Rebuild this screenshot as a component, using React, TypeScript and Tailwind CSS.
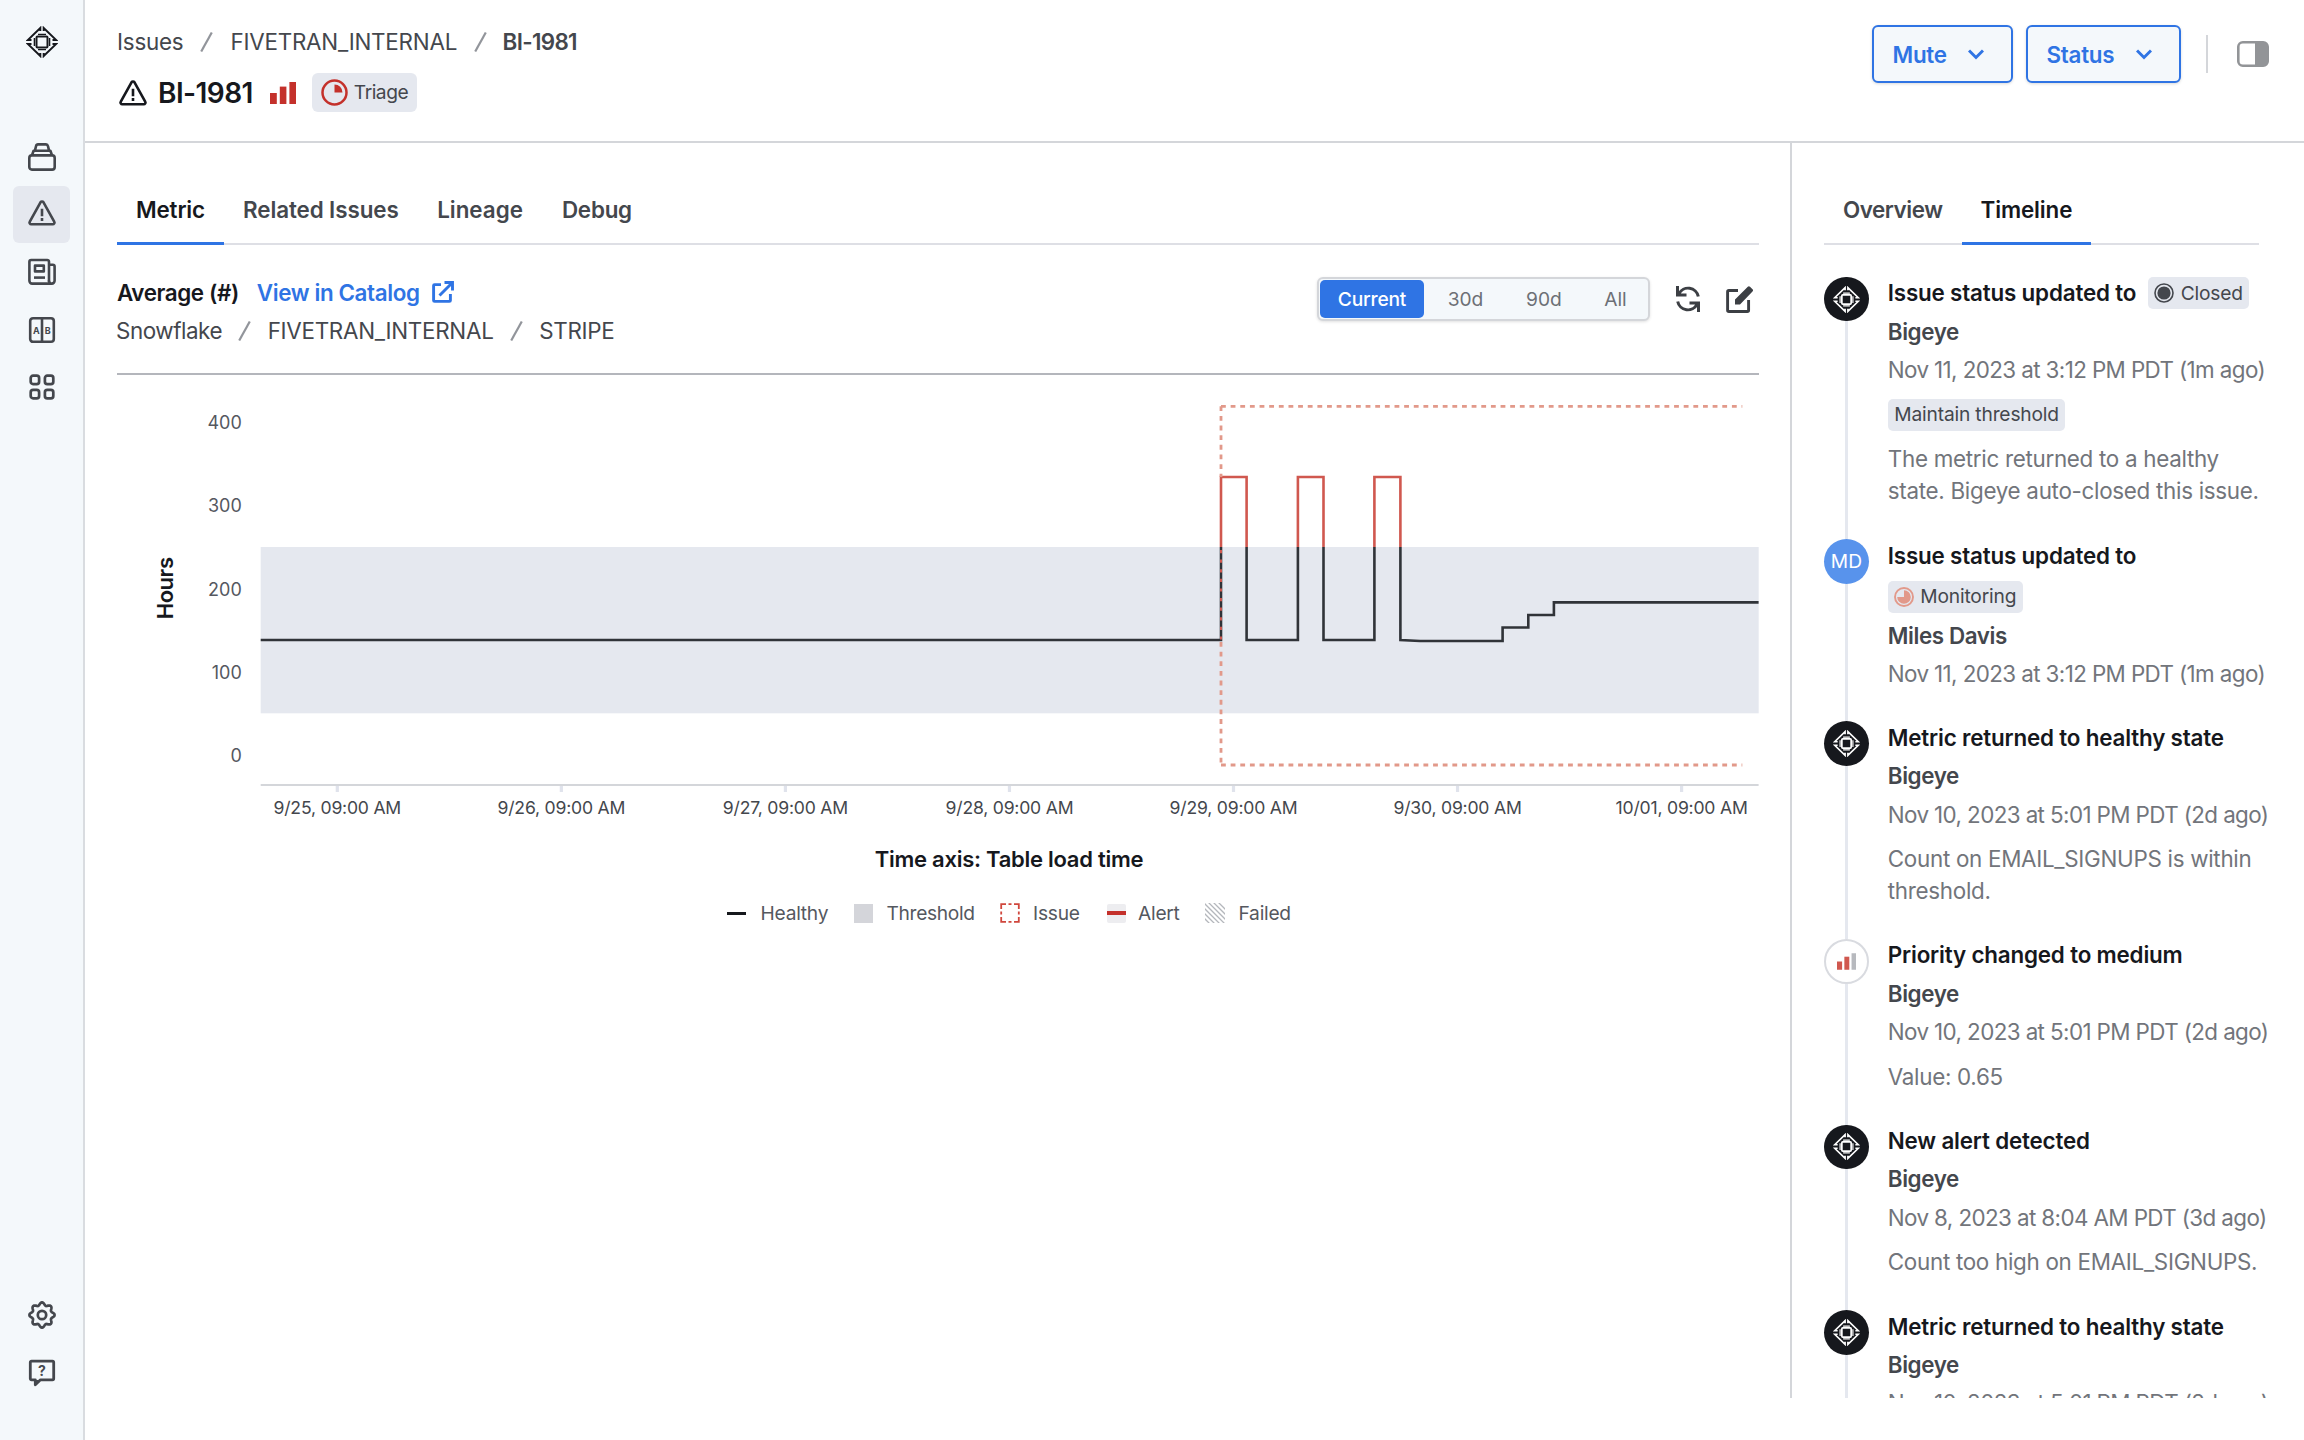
import type { ReactNode } from 'react'
import clsx from 'clsx'

function BigeyeMark({ className }: { className?: string }) {
  return (
    <svg viewBox="0 0 32 32" fill="none" stroke="currentColor" strokeWidth="2" className={className}>
      <path d="M14.3 5V2L2 13.900h3.500M17.700 5V2L30 13.900h-3.500M14.300 27v3L2 18.100h3.500M17.700 27v3L30 18.100h-3.500" />
      <rect x="10.5" y="10.5" width="11" height="11" rx="1" />
      <path d="M12 8.4h8M12 23.6h8M8.4 12v8M23.6 12v8" strokeWidth="1.4" />
    </svg>
  )
}

function WarningIcon({ className }: { className?: string }) {
  return (
    <svg viewBox="0 0 28 26" fill="none" stroke="currentColor" strokeWidth="2.6" strokeLinejoin="round" className={className}>
      <path d="M12.5 2.3a1.8 1.8 0 0 1 3 0l10.7 19.3a1.7 1.7 0 0 1-1.5 2.6H3.3a1.7 1.7 0 0 1-1.5-2.6z" />
      <path d="M14 8.8v7.4M14 18v3" />
    </svg>
  )
}

function CollectionsIcon() {
  return (
    <svg viewBox="0 0 28 28" fill="none" stroke="currentColor" strokeWidth="2.6" strokeLinejoin="round" className="size-7">
      <rect x="1.3" y="12.4" width="25.4" height="14.2" rx="2.6" />
      <path d="M4 12.2l1.6-4.4h16.8l1.6 4.4M7 7.4l1-4.2c.3-1.2 1-1.8 2-1.8h8c1 0 1.7.6 2 1.8l1 4.2" />
    </svg>
  )
}

function NewsIcon() {
  return (
    <svg viewBox="0 0 28 28" fill="none" stroke="currentColor" strokeWidth="2.6" strokeLinejoin="round" className="size-7">
      <path d="M21 24V3.8A1.8 1.8 0 0 0 19.2 2H3.2a1.8 1.8 0 0 0-1.8 1.8v19a2.8 2.8 0 0 0 2.8 2.8h19.6a2.8 2.8 0 0 0 2.8-2.8V8.6a1.8 1.8 0 0 0-1.8-1.8H21" />
      <path d="M21 22.5a3 3 0 0 0 1.5 3" />
      <rect x="7" y="7.6" width="8.8" height="5.8" />
      <path d="M6 19.6h11" />
    </svg>
  )
}

function CompareIcon() {
  return (
    <svg viewBox="0 0 28 28" fill="none" stroke="currentColor" strokeWidth="2.6" className="size-7">
      <rect x="2.2" y="2.2" width="23.6" height="23.6" rx="2.8" />
      <path d="M14 2v24" />
      <text x="8.4" y="17.5" textAnchor="middle" fill="currentColor" stroke="none" className="text-[9px] font-bold">A</text>
      <text x="19.8" y="17.5" textAnchor="middle" fill="currentColor" stroke="none" className="text-[9px] font-bold">B</text>
    </svg>
  )
}

function GridIcon() {
  return (
    <svg viewBox="0 0 28 28" fill="none" stroke="currentColor" strokeWidth="2.7" className="size-7">
      <rect x="2.7" y="2.7" width="8.4" height="8.4" rx="2.4" />
      <rect x="16.9" y="2.7" width="8.4" height="8.4" rx="2.4" />
      <rect x="2.7" y="16.9" width="8.4" height="8.4" rx="2.4" />
      <rect x="16.9" y="16.9" width="8.4" height="8.4" rx="2.4" />
    </svg>
  )
}

// eight rounded lobes around the hub
const gearPoints = Array.from({ length: 96 }, (_, i) => {
  const a = (i / 96) * Math.PI * 2
  const r = 11.2 + 1.4 * Math.cos(8 * a)
  return `${(14 + r * Math.cos(a)).toFixed(2)},${(14 + r * Math.sin(a)).toFixed(2)}`
}).join(' ')

function GearIcon() {
  return (
    <svg viewBox="0 0 28 28" fill="none" stroke="currentColor" strokeWidth="2.7" strokeLinejoin="round" className="size-7">
      <polygon points={gearPoints} />
      <circle cx="14" cy="14" r="4.2" />
    </svg>
  )
}

function HelpIcon() {
  return (
    <svg viewBox="0 0 28 28" fill="none" stroke="currentColor" strokeWidth="2.8" strokeLinejoin="round" className="size-7">
      <path d="M3.5 2.2h21a1.2 1.2 0 0 1 1.2 1.2v16.2a1.2 1.2 0 0 1-1.2 1.2H12.5L7.3 25.8v-5H3.5a1.2 1.2 0 0 1-1.2-1.2V3.4a1.2 1.2 0 0 1 1.2-1.2z" />
      <path d="M7 21h4.5l-4.2 4.5z" fill="currentColor" stroke="none" />
      <text x="14" y="16.5" textAnchor="middle" fill="currentColor" stroke="none" className="text-[14px] font-bold">?</text>
    </svg>
  )
}

function PriorityBars({ className, lastClass = 'fill-current' }: { className?: string; lastClass?: string }) {
  return (
    <svg viewBox="0 0 26 22" fill="currentColor" className={className}>
      <rect x="0" y="11" width="6.8" height="11" />
      <rect x="9.8" y="4.6" width="6.6" height="17.4" />
      <rect x="19.4" y="0" width="6.6" height="22" className={lastClass} />
    </svg>
  )
}

function Chevron() {
  return (
    <svg viewBox="0 0 16 11" fill="none" stroke="currentColor" strokeWidth="3" className="h-[11px] w-4">
      <path d="M1 1.5l7 7 7-7" />
    </svg>
  )
}

function Tag({ children, className }: { children: ReactNode; className?: string }) {
  return (
    <span className={clsx('inline-flex h-8 items-center rounded-[5px] bg-[#e5e8ef] px-[6.5px] text-[19.2px] tracking-[-0.009em] text-[#44474d]', className)}>
      {children}
    </span>
  )
}

function ClosedTag() {
  return (
    <Tag className="ml-[11.5px]">
      <svg viewBox="0 0 20 20" fill="none" stroke="currentColor" strokeWidth="1.6" className="mr-[6.5px] size-5">
        <circle cx="10" cy="10" r="9" />
        <circle cx="10" cy="10" r="6.6" fill="currentColor" stroke="none" />
      </svg>
      Closed
    </Tag>
  )
}

function MonitoringTag() {
  return (
    <Tag>
      <svg viewBox="0 0 20 20" fill="none" className="mr-[6px] size-5 text-[#e2998a]">
        <circle cx="10" cy="10" r="9" stroke="currentColor" strokeWidth="1.9" />
        <path d="M10 10V3.2A6.8 6.8 0 1 1 3.2 10z" fill="currentColor" />
      </svg>
      Monitoring
    </Tag>
  )
}

const navItems = [CollectionsIcon, null, NewsIcon, CompareIcon, GridIcon]

function Sidebar() {
  return (
    <aside className="flex w-[85px] shrink-0 flex-col items-center border-r-2 border-[#d9dce0] bg-[#f4f8fb] text-[#44474d]">
      <BigeyeMark className="mt-[26px] size-8 text-[#16181d]" />
      <nav className="mt-[70px] flex flex-col">
        {navItems.map((Icon, i) => (
          <a key={i} className={clsx('flex size-[57.6px] items-center justify-center rounded-[6px]', !Icon && 'bg-[#e5e8ef]')}>
            {Icon ? <Icon /> : <WarningIcon className="-mt-[3px] h-[26px] w-7" />}
          </a>
        ))}
      </nav>
      <div className="mt-auto mb-[38.5px] flex flex-col">
        <a className="flex h-[57.6px] items-center"><GearIcon /></a>
        <a className="flex h-[57.6px] items-center"><HelpIcon /></a>
      </div>
    </aside>
  )
}

function Slash() {
  return (
    <svg viewBox="0 0 13 20" stroke="#92959b" strokeWidth="2.2" className="h-5 w-[13px] shrink-0">
      <path d="M1.2 19.5 11.8.5" />
    </svg>
  )
}

function HeaderButton({ label, className }: { label: string; className: string }) {
  return (
    <button className={clsx('flex h-[58px] items-center justify-between rounded-[6px] border-2 border-[#2f74e4] bg-[#f4f8fb] pt-px pr-[27px] pl-[19px] text-[22.4px] font-semibold tracking-[-0.012em] text-[#2f74e4] shadow-[0_1px_3px_rgba(0,0,0,0.15)]', className)}>
      {label}
      <Chevron />
    </button>
  )
}

function Header() {
  return (
    <header className="flex h-[143px] shrink-0 justify-between border-b-2 border-[#d4d6da] pl-8">
      <div className="pt-[23px]">
        <div className="flex h-[38px] items-center gap-[17px] text-[22.4px] tracking-[-0.01em] text-[#44474d]">
          <span>Issues</span>
          <Slash />
          <span>FIVETRAN_INTERNAL</span>
          <Slash />
          <span className="-ml-[1.5px] font-semibold tracking-[-0.03em]">BI-1981</span>
        </div>
        <div className="mt-[12.5px] flex h-[38px] items-center">
          <WarningIcon className="ml-[2px] h-[26px] w-7 text-[#16181d]" />
          <h1 className="ml-[11px] text-[28px] font-semibold tracking-[-0.02em] text-[#16181d]">BI-1981</h1>
          <PriorityBars className="ml-[17px] h-[22px] w-[26px] text-[#c4312b]" />
          <span className="ml-4 flex h-[38.4px] items-center rounded-[6px] bg-[#e5e8ef] px-[9px] text-[19.2px] tracking-[-0.025em] text-[#44474d]">
            <svg viewBox="0 0 27 27" fill="none" className="mr-[6px] size-[27px] text-[#c4312b]">
              <circle cx="13.5" cy="13.5" r="12" stroke="currentColor" strokeWidth="2.5" />
              <path d="M13.5 5.5a8 8 0 0 1 8 8h-8z" fill="currentColor" />
            </svg>
            Triage
          </span>
        </div>
      </div>
      <div className="flex items-start pt-[25px]">
        <HeaderButton label="Mute" className="w-[141px]" />
        <HeaderButton label="Status" className="ml-[13px] w-[155.5px]" />
        <div className="mt-[10px] ml-[25px] h-[38px] w-[2px] bg-[#d4d6da]" />
        <svg viewBox="0 0 32 26" fill="none" className="mt-4 mr-[35px] ml-[29px] h-[26px] w-8 text-[#929497]">
          <rect x="1.3" y="1.3" width="29.4" height="23.4" rx="4.5" stroke="currentColor" strokeWidth="2.6" />
          <path d="M18 1h8.5A4.5 4.5 0 0 1 31 5.5v15a4.5 4.5 0 0 1-4.5 4.5H18z" fill="currentColor" />
        </svg>
      </div>
    </header>
  )
}

function Tab({ label, active, className }: { label: string; active?: boolean; className?: string }) {
  return (
    <button
      className={clsx(
        '-mb-[2px] h-[70px] border-b-[3.5px] pt-[3.5px] text-[22.4px] font-semibold',
        active ? 'border-[#2f74e4] text-[#16181d]' : 'border-transparent text-[#44474d]',
        className,
      )}
    >
      {label}
    </button>
  )
}

const yTicks = [400, 300, 200, 100, 0]
const xTicks = ['9/25', '9/26', '9/27', '9/28', '9/29', '9/30', '10/01']
const yFor = (v: number) => 380.6 - v * 0.8328
const seriesPath =
  'M143.7 265H1104V102H1129.6V265H1180.9V102H1206.5V265H1257.4V102H1283.4V265L1303 266H1385.6V252.5H1411.3V240H1436.9V227.4H1641.6'

function Chart() {
  return (
    <svg viewBox="0 0 1642 524" className="h-[524px] w-[1642px]">
      <defs>
        <clipPath id="above"><rect x="0" y="0" width="1642" height="172" /></clipPath>
        <clipPath id="within"><rect x="0" y="172" width="1642" height="240" /></clipPath>
      </defs>
      <rect x="143.7" y="172" width="1498" height="166.3" fill="#e5e8ef" />
      {yTicks.map((v) => (
        <text key={v} x="124.8" y={yFor(v) + 6.7} textAnchor="end" fill="#55585f" className="text-[18px]">{v}</text>
      ))}
      <text transform="translate(56.3 213.4) rotate(-90)" textAnchor="middle" fill="#16181d" className="text-[22px] font-semibold tracking-[-0.02em]">Hours</text>

      <path d={seriesPath} fill="none" stroke="#303338" strokeWidth="2.6" clipPath="url(#within)" />
      <path d={seriesPath} fill="none" stroke="#d0584f" strokeWidth="2.6" clipPath="url(#above)" />
      <g fill="none" stroke="#e2998a" strokeWidth="2.8" strokeDasharray="4.82 4.82">
        <path d="M1104 31.3H1625.3M1104 390H1625.3" />
        <path d="M1104 31.3V102M1104 267V390" />
      </g>
      <path d="M1104 175V266" stroke="#d0584f" strokeWidth="2" strokeDasharray="3.2 6.4" />

      <path d="M143.7 410H1641.6" stroke="#d4d6da" strokeWidth="2" />
      {xTicks.map((d, i) => (
        <g key={d} transform={`translate(${220.3 + i * 224.05} 0)`}>
          <path d="M0 411v6" stroke="#e0e3ec" strokeWidth="3.2" />
          <text y="439.2" textAnchor="middle" fill="#44474d" className="text-[17.6px] tracking-[-0.012em]">{d}, 09:00 AM</text>
        </g>
      ))}
      <text x="892" y="492.2" textAnchor="middle" fill="#16181d" className="text-[22px] font-semibold tracking-[-0.012em]">Time axis: Table load time</text>
    </svg>
  )
}

function Legend() {
  return (
    <div className="ml-[610px] flex h-7 items-center text-[19.2px] tracking-[-0.013em] whitespace-nowrap text-[#55585f]">
      <span className="h-[3px] w-[19px] bg-[#16181d]" />
      <span className="w-[107.5px] pl-[14.5px]">Healthy</span>
      <span className="h-[19px] w-[19.5px] bg-[#d4d5da]" />
      <span className="w-[127px] pl-[13.5px] tracking-[-0.017em]">Threshold</span>
      <svg viewBox="0 0 20 20" fill="none" className="size-5">
        <path d="M1.2 6V1.2H6M14 1.2h4.8V6M18.8 14v4.8H14M6 18.8H1.2V14M1.2 8.5v3M18.8 8.5v3M8.5 1.2h3M8.5 18.8h3" stroke="#d0473d" strokeWidth="1.8" />
      </svg>
      <span className="w-[86.5px] pl-[13px]">Issue</span>
      <span className="flex h-[19px] w-[19px] items-center rounded-[2px] bg-[#ededf0]">
        <span className="h-[3.5px] w-full bg-[#c4312b]" />
      </span>
      <span className="w-[79.5px] pl-[12.5px]">Alert</span>
      <svg viewBox="0 0 20 20" stroke="#b4b7bc" strokeWidth="1.3" className="size-5 overflow-hidden">
        <path d="M-2 14l8 8M-2 9l13 13M-2 4l18 18M-2-1l23 23M3-1l18 18M8-1l13 13M13-1l8 8" />
      </svg>
      <span className="pl-[13.5px]">Failed</span>
    </div>
  )
}

function MetricPanel() {
  return (
    <main className="w-[1707px] shrink-0 border-r-2 border-[#d4d6da] pl-8">
      <div className="flex h-[102px] w-[1642px] items-end border-b-2 border-[#dedfe5]">
        <Tab label="Metric" active className="px-[19px] tracking-[-0.006em]" />
        <Tab label="Related Issues" className="px-[19px] tracking-[-0.004em]" />
        <Tab label="Lineage" className="px-[19.5px]" />
        <Tab label="Debug" className="px-[19.5px] tracking-[-0.01em]" />
      </div>

      <div className="flex h-[130px] w-[1642px] justify-between border-b-2 border-[#b4b6bc] pt-[28px]">
        <div className="pt-[0.3px]">
          <div className="flex h-[38.4px] items-center text-[22.4px] font-semibold">
            <span className="tracking-[-0.018em] text-[#16181d]">Average (#)</span>
            <a className="ml-[18px] flex items-center tracking-[-0.017em] text-[#2f74e4]">
              View in Catalog
              <svg viewBox="0 0 22 22" fill="none" stroke="currentColor" strokeWidth="2.9" className="ml-[12.5px] size-[22px]">
                <path d="M9 3.6H2.6a1 1 0 0 0-1 1v14.8a1 1 0 0 0 1 1h14.8a1 1 0 0 0 1-1V13M12.5 1.5h8v8M20 2 7.5 14.5" />
              </svg>
            </a>
          </div>
          <div className="flex h-[38.4px] items-center gap-[16.3px] text-[22.4px] tracking-[-0.012em] text-[#44474d]">
            <span className="-ml-px tracking-[-0.02em]">Snowflake</span>
            <Slash />
            <span>FIVETRAN_INTERNAL</span>
            <Slash />
            <span>STRIPE</span>
          </div>
        </div>

        <div className="flex h-[44px] items-center pt-[8px]">
          <div className="flex h-[44px] items-center rounded-[6px] border-2 border-[#d4d6da] bg-[#f4f8fb] text-[19.2px] text-[#6d7076] shadow-[0_1px_3px_rgba(0,0,0,0.12)]">
            <span className="ml-px flex h-[38.5px] w-[104px] items-center justify-center rounded-[5px] bg-[#2f74e4] font-medium tracking-[-0.01em] text-white">Current</span>
            <span className="flex w-[83px] justify-center">30d</span>
            <span className="flex w-[74px] justify-center">90d</span>
            <span className="flex w-[67px] justify-center pl-[2px]">All</span>
          </div>
          <svg viewBox="0 0 24 26" fill="none" stroke="#3c3f44" strokeWidth="3" className="ml-[26px] h-[26px] w-6">
            <path d="M1.5 0v9h9M3 7.8A10.3 10.3 0 0 1 22.3 10.5" />
            <path d="M22.5 26v-9h-9M21 18.2A10.3 10.3 0 0 1 1.7 15.5" />
          </svg>
          <svg viewBox="0 0 27 27" fill="none" className="mr-[6px] ml-[26px] size-[27px] text-[#3c3f44]">
            <path d="M12 4.5H2.9a1.3 1.3 0 0 0-1.3 1.3v18.4a1.3 1.3 0 0 0 1.3 1.3h18.4a1.3 1.3 0 0 0 1.3-1.3V14" stroke="currentColor" strokeWidth="2.9" />
            <path d="M9 18.5v-5L21.8.8a1.5 1.5 0 0 1 2.2 0l2.5 2.5a1.5 1.5 0 0 1 0 2.2L14 18.5z" fill="currentColor" />
          </svg>
        </div>
      </div>

      <Chart />
      <Legend />
    </main>
  )
}

type TimelineEvent = {
  kind: 'bigeye' | 'user' | 'priority'
  title: string
  inlineTag?: ReactNode
  tag?: ReactNode
  author: string
  date: string
  label?: string
  body?: string[]
  className: string
}

const events: TimelineEvent[] = [
  {
    kind: 'bigeye',
    title: 'Issue status updated to',
    inlineTag: <ClosedTag />,
    author: 'Bigeye',
    date: 'Nov 11, 2023 at 3:12 PM PDT (1m ago)',
    label: 'Maintain threshold',
    body: ['The metric returned to a healthy', 'state. Bigeye auto-closed this issue.'],
    className: 'h-[262.4px]',
  },
  {
    kind: 'user',
    title: 'Issue status updated to',
    tag: <MonitoringTag />,
    author: 'Miles Davis',
    date: 'Nov 11, 2023 at 3:12 PM PDT (1m ago)',
    className: 'h-[182.2px]',
  },
  {
    kind: 'bigeye',
    title: 'Metric returned to healthy state',
    author: 'Bigeye',
    date: 'Nov 10, 2023 at 5:01 PM PDT (2d ago)',
    body: ['Count on EMAIL_SIGNUPS is within', 'threshold.'],
    className: 'h-[217.7px]',
  },
  {
    kind: 'priority',
    title: 'Priority changed to medium',
    author: 'Bigeye',
    date: 'Nov 10, 2023 at 5:01 PM PDT (2d ago)',
    body: ['Value: 0.65'],
    className: 'h-[185.6px]',
  },
  {
    kind: 'bigeye',
    title: 'New alert detected',
    author: 'Bigeye',
    date: 'Nov 8, 2023 at 8:04 AM PDT (3d ago)',
    body: ['Count too high on EMAIL_SIGNUPS.'],
    className: 'h-[185.6px]',
  },
  {
    kind: 'bigeye',
    title: 'Metric returned to healthy state',
    author: 'Bigeye',
    date: 'Nov 10, 2023 at 5:01 PM PDT (2d ago)',
    className: 'h-[217.6px]',
  },
]

function Avatar({ kind }: { kind: TimelineEvent['kind'] }) {
  return (
    <div
      className={clsx(
        'flex size-[44.8px] shrink-0 items-center justify-center rounded-full',
        kind === 'bigeye' && 'bg-[#16181d] text-white',
        kind === 'user' && 'bg-[#5893ec] text-[19.2px] text-white',
        kind === 'priority' && 'border-2 border-[#d9dbe0] bg-white',
      )}
    >
      {kind === 'bigeye' && <BigeyeMark className="size-[27px]" />}
      {kind === 'user' && 'MD'}
      {kind === 'priority' && <PriorityBars className="h-[19px] w-[19.5px] text-[#d0584f]" lastClass="fill-[#b7b9be]" />}
    </div>
  )
}

function Event({ event }: { event: TimelineEvent }) {
  return (
    <li className={clsx('flex shrink-0', event.className)}>
      <div className="flex w-[44.8px] flex-col items-center">
        <Avatar kind={event.kind} />
        <div className="w-[2.5px] flex-1 bg-[#e5e8ef]" />
      </div>
      <div className="-mt-[2.9px] ml-[19px] text-[22.4px] whitespace-nowrap">
        <div className="flex h-[38.4px] items-center font-semibold tracking-[-0.008em] text-[#16181d]">
          {event.title}
          {event.inlineTag && <span className="flex font-normal">{event.inlineTag}</span>}
        </div>
        {event.tag && <div className="mt-[6px] mb-[4px] flex">{event.tag}</div>}
        <div className="flex h-[38.4px] items-center font-semibold tracking-[-0.018em] text-[#44474d]">{event.author}</div>
        <div className="flex h-[38.4px] items-center tracking-[-0.027em] text-[#72757b]">{event.date}</div>
        {event.label && <div className="mt-[9.6px] flex pb-[3.2px]"><Tag>{event.label}</Tag></div>}
        {event.body && (
          <div className="mt-[9.6px] leading-8 tracking-[-0.013em] text-[#72757b]">
            {event.body.map((line) => <p key={line}>{line}</p>)}
          </div>
        )}
      </div>
    </li>
  )
}

function TimelinePanel() {
  return (
    <aside className="flex h-[1255px] flex-1 flex-col overflow-hidden pl-8">
      <div className="flex h-[102px] w-[435px] shrink-0 items-end border-b-2 border-[#dedfe5]">
        <Tab label="Overview" className="px-[19px] tracking-[-0.02em]" />
        <Tab label="Timeline" active className="px-[19px] tracking-[-0.005em]" />
      </div>
      <ul className="flex flex-col pt-[31.7px]">
        {events.map((event, i) => <Event key={i} event={event} />)}
      </ul>
    </aside>
  )
}

export default function App() {
  return (
    <div className="flex h-[1440px] w-[2304px] overflow-hidden bg-white font-['Inter','Liberation_Sans',sans-serif]">
      <Sidebar />
      <div className="flex min-w-0 flex-1 flex-col">
        <Header />
        <div className="flex h-[1255px]">
          <MetricPanel />
          <TimelinePanel />
        </div>
      </div>
    </div>
  )
}
